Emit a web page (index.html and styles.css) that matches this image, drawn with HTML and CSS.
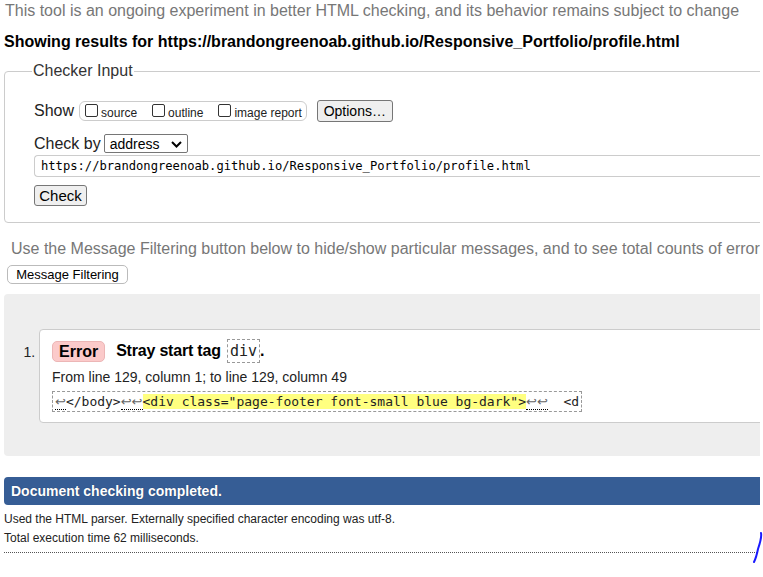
FILE: index.html
```html
<!DOCTYPE html>
<html lang="en">
<head>
<meta charset="utf-8">
<title>Nu Html Checker</title>
<link rel="stylesheet" href="styles.css">
</head>
<body>
<div class="page">
  <p class="intro">This tool is an ongoing experiment in better HTML checking, and its behavior remains subject to change</p>
  <h2 class="results">Showing results for https://brandongreenoab.github.io/Responsive_Portfolio/profile.html</h2>

  <fieldset class="checker">
    <legend class="legend">Checker Input</legend>
    <div class="row show-row">
      <span class="row-label">Show</span>
      <span class="opts">
        <label class="opt"><span class="cb"></span><span class="opt-text">source</span></label>
        <label class="opt"><span class="cb"></span><span class="opt-text">outline</span></label>
        <label class="opt"><span class="cb"></span><span class="opt-text">image report</span></label>
      </span>
      <button class="btn options-btn" type="button">Options…</button>
    </div>
    <div class="row checkby-row">
      <span class="row-label">Check by</span>
      <span class="select">address
        <svg class="chev" width="11" height="7" viewBox="0 0 11 7"><path d="M1 1 L5.5 5.5 L10 1" fill="none" stroke="#000" stroke-width="2"/></svg>
      </span>
    </div>
    <div class="url">https://brandongreenoab.github.io/Responsive_Portfolio/profile.html</div>
    <button class="btn check-btn" type="button">Check</button>
  </fieldset>

  <p class="filter-note">Use the Message Filtering button below to hide/show particular messages, and to see total counts of errors and warnings.</p>
  <button class="filter-btn" type="button">Message Filtering</button>

  <div class="results-area">
    <ol class="messages">
      <li class="msg">
        <p class="msg-head"><strong class="badge">Error</strong> <span class="msg-title">Stray start tag <code class="tag">div</code>.</span></p>
        <p class="loc">From line 129, column 1; to line 129, column 49</p>
        <p class="extract"><code><span class="nl">↩</span>&lt;/body&gt;<span class="nl">↩↩</span><b class="hl">&lt;div class="page-footer font-small blue bg-dark"&gt;</b><span class="nl">↩↩</span>&nbsp; &lt;d</code></p>
      </li>
    </ol>
  </div>

  <p class="done">Document checking completed.</p>
  <p class="details first">Used the HTML parser. Externally specified character encoding was utf-8.</p>
  <p class="details">Total execution time 62 milliseconds.</p>
  <hr class="dotted">
</div>
<svg class="scribble" width="12" height="34" viewBox="0 0 12 34"><path d="M9 2 C10 6 8 12 6 18 C5 23 4 27 2 31" fill="none" stroke="#1a1aff" stroke-width="2" stroke-linecap="round"/></svg>
</body>
</html>
```

FILE: styles.css
```css
html, body {
  margin: 0;
  padding: 0;
  background: #fff;
}
body {
  font-family: "Liberation Sans", Arial, sans-serif;
  color: #000;
  position: relative;
  height: 577px;
  overflow: hidden;
}
.page {
  width: 760px;
  overflow: hidden;
}
.intro {
  margin: 0;
  padding: 2px 0 0 5px;
  font-size: 16px;
  line-height: 18px;
  color: #777;
  white-space: nowrap;
}
.results {
  margin: 13px 0 0 4px;
  font-size: 16px;
  line-height: 18px;
  font-weight: bold;
  white-space: nowrap;
}
.checker {
  margin: 11px 0 0 4px;
  width: 820px;
  box-sizing: border-box;
  border: 1px solid #ccc;
  border-radius: 4px;
  padding: 8px 0 16px 29px;
}
.legend {
  font-size: 16px;
  color: #333;
  padding: 0 1px;
  margin-left: -2px;
}
.row {
  display: flex;
  align-items: center;
}
.row-label {
  font-size: 16px;
  color: #222;
}
.show-row {
  margin-top: 12px;
}
.opts {
  display: inline-flex;
  align-items: center;
  margin-left: 5px;
  border: 1px solid #ccc;
  border-radius: 6px;
  height: 18px;
  padding: 0 4px 0 5px;
}
.opt {
  display: inline-flex;
  align-items: center;
  gap: 3px;
  font-size: 12px;
  color: #222;
}
.opt + .opt { margin-left: 15px; }
.cb {
  width: 11px;
  height: 11px;
  border: 1px solid #333;
  border-radius: 2px;
  background: #fff;
  margin-top: -2px;
}
.opt-text { margin-top: 3px; }
.btn {
  font-family: "Liberation Sans", Arial, sans-serif;
  background: #efefef;
  border: 1px solid #767676;
  border-radius: 3px;
  color: #000;
  padding: 0;
}
.options-btn {
  margin-left: 10px;
  width: 76px;
  height: 22px;
  font-size: 14px;
}
.checkby-row {
  margin-top: 12px;
}
.select {
  margin-left: 3px;
  display: inline-flex;
  align-items: center;
  justify-content: space-between;
  width: 84px;
  height: 19px;
  box-sizing: border-box;
  border: 1px solid #767676;
  border-radius: 2px;
  padding: 0 5px 0 5px;
  font-size: 14px;
  color: #000;
}
.chev { margin-top: 1px; }
.url {
  margin-top: 2px;
  height: 22px;
  box-sizing: border-box;
  border: 1px solid #ccc;
  border-right: none;
  border-radius: 4px 0 0 4px;
  padding: 2px 0 0 6px;
  font-family: "DejaVu Sans Mono", Consolas, monospace;
  font-size: 12.15px;
  line-height: 16px;
  color: #000;
}
.check-btn {
  margin-top: 8px;
  width: 53px;
  height: 21px;
  font-size: 15px;
  display: block;
}
.filter-note {
  margin: 17px 0 0 11px;
  font-size: 16px;
  line-height: 18px;
  color: #777;
  white-space: nowrap;
}
.filter-btn {
  display: block;
  margin: 7px 0 0 7px;
  width: 121px;
  height: 19px;
  padding: 0;
  background: #fff;
  border: 1px solid #bbb;
  border-radius: 5px;
  font-family: "Liberation Sans", Arial, sans-serif;
  font-size: 13px;
  color: #000;
}
.results-area {
  margin: 10px 0 0 4px;
  width: 820px;
  background: #eee;
  border-radius: 4px;
  padding: 35px 0 33px 0;
}
.messages {
  margin: 0;
  padding: 0 0 0 35px;
  font-size: 14px;
  color: #222;
}
.msg {
  background: #fff;
  border: 1px solid #ccc;
  border-radius: 4px;
  padding: 9px 0 10px 12px;
}
.msg::marker {
  font-size: 14px;
}
.msg p { margin: 0; }
.msg-head {
  display: flex;
  align-items: center;
  font-size: 16px;
  line-height: 22px;
}
.badge {
  display: inline-block;
  background: #fbcaca;
  border: 1px solid #ecb6b6;
  border-radius: 5px;
  padding: 0 6px;
  height: 19px;
  line-height: 19px;
  margin-right: 11px;
  color: #000;
}
.msg-title {
  font-weight: bold;
  color: #000;
  letter-spacing: -0.2px;
}
.tag {
  display: inline-block;
  font-family: "DejaVu Sans Mono", Consolas, monospace;
  font-weight: normal;
  font-size: 15px;
  border: 1px dashed #999;
  padding: 2px 2px;
  line-height: 18px;
  margin-left: 2px;
  color: #222;
  letter-spacing: 0;
}
.loc {
  font-size: 14px;
  line-height: 18px;
  margin-top: 5px !important;
  color: #222;
}
.extract {
  margin-top: 5px !important;
  display: inline-block;
  border: 1px dashed #999;
  padding: 1px 2px 1px 2px;
  font-family: "DejaVu Sans Mono", Consolas, monospace;
  font-size: 13px;
  line-height: 17px;
  white-space: nowrap;
  color: #222;
}
.extract code { font-family: inherit; }
.nl {
  font-family: "DejaVu Sans", sans-serif;
  font-size: 13px;
  color: #666;
  border-bottom: 1px dotted #000;
}
.hl {
  background: #ffff80;
  font-weight: normal;
  color: #222;
}
.done {
  margin: 21px 0 0 4px;
  width: 820px;
  background: #365d95;
  border-radius: 4px;
  color: #fff;
  font-weight: bold;
  font-size: 14px;
  height: 28px;
  line-height: 28px;
  padding-left: 7px;
  text-shadow: 0 0 1px #1c3359;
}
.details {
  margin: 2px 0 0 4px;
  font-size: 12px;
  line-height: 17px;
  color: #222;
}
.details.first {
  margin-top: 6px;
}
.dotted {
  margin: 5px 3px 0 4px;
  border: none;
  border-top: 1px dotted #555;
  height: 0;
}
.scribble {
  position: absolute;
  left: 752px;
  top: 531px;
}
```
